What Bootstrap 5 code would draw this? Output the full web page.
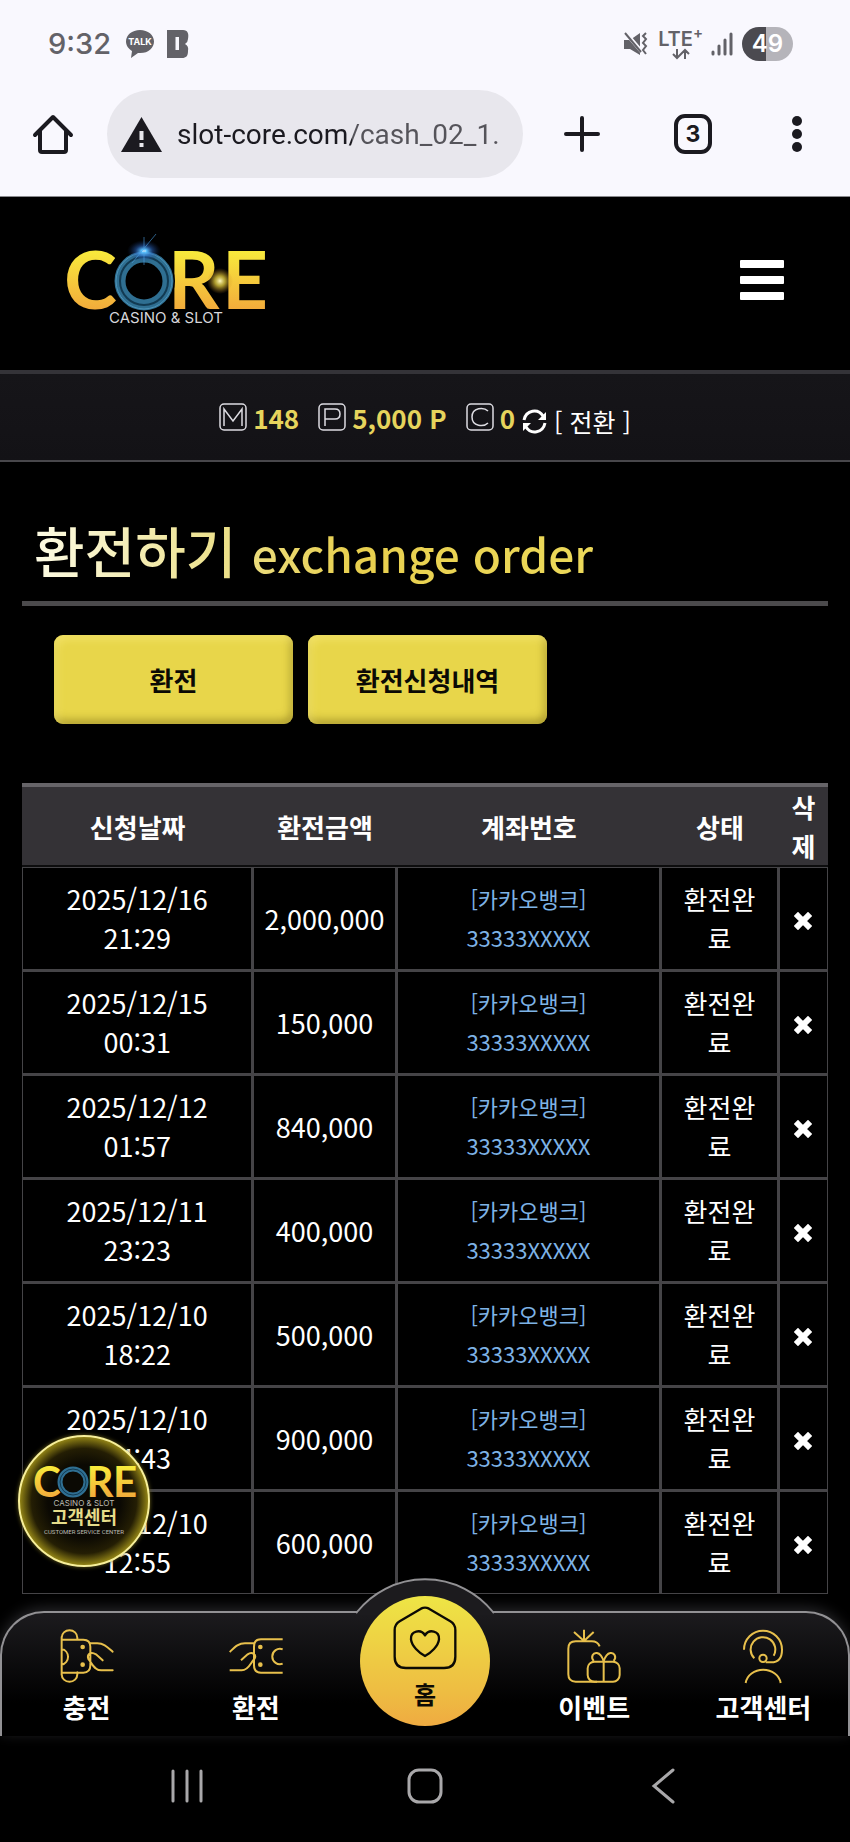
<!DOCTYPE html>
<html lang="ko">
<head>
<meta charset="utf-8">
<meta name="viewport" content="width=device-width, initial-scale=1">
<title>환전하기 - CORE CASINO &amp; SLOT</title>
<link href="https://cdn.jsdelivr.net/npm/bootstrap@5.3.0/dist/css/bootstrap.min.css" rel="stylesheet">
<style>
  body { background: #000; color: #fff; font-family: "Noto Sans CJK KR", sans-serif; font-size: 27px; line-height: 39px; }
  svg { display: block; flex-shrink: 0; overflow: visible; }
  .plain-btn { background: none; border: 0; padding: 0; color: inherit; }

  /* phone and browser chrome */
  .chrome-top { background: #f9f8fe; color: #1b1a20; font-family: Inter, sans-serif; border-bottom: 1px solid #8a8a8e; }
  .status-row { height: 90px; padding: 0 57px 3px 48px; color: #636268; }
  .clock { font-size: 29px; font-weight: 500; }
  .net-label { font-size: 20px; line-height: 20px; font-weight: 600; margin: 0 8px 0 10px; }
  .battery { width: 51px; height: 34px; border-radius: 17px; background: linear-gradient(90deg, #4b4a50 48%, #b5b4ba 48%); color: #fff; font-size: 24px; line-height: 34px; font-weight: 600; text-align: center; margin-left: 9px; }
  .status-apps { gap: 12px; margin-left: 14px; }
  .tool-row { padding: 0 48px 18px 33px; }
  .url-pill { height: 88px; border-radius: 44px; background: #e8e7ed; padding: 0 16px 0 14px; margin: 0 41px 0 34px; min-width: 0; gap: 15px; }
  .url-box { border: 0; outline: 0; padding: 0; width: 100%; min-width: 0; font-family: Roboto, sans-serif; font-size: 28px; color: transparent; background: linear-gradient(90deg, #1b1a20 175px, #55545a 175px); -webkit-background-clip: text; background-clip: text; }
  .tab-count { width: 40px; height: 40px; border: 4px solid #1b1a20; border-radius: 11px; font-size: 23px; line-height: 32px; font-weight: 700; margin: 0 80px 0 74px; }

  /* site header */
  .site-head { padding: 34px 66px 34px 66px; height: 173px; }
  .menu-btn { margin-top: 29px; }
  .wallet { background: linear-gradient(#161519, #131216); border-top: 4px solid #343338; border-bottom: 2px solid #48474b; height: 92px; }
  .wallet-item { gap: 6px; margin-right: 19px; }
  .wallet-item:nth-child(3) { margin-right: 7px; }
  .amount { color: #e6d45c; font-weight: 700; font-size: 26px; }
  .swap-link { font-size: 25px; gap: 7px; }

  /* page */
  .page-body { padding: 0 22px 17px; }
  .page-title { padding: 49px 12px 5px; margin: 0; border-bottom: 5px solid #4b4a4c; line-height: 76px; font-weight: 500; }
  .page-title span { background: linear-gradient(90deg, #fdfbe4, #ece08a 190px, #e8cf4e 320px, #ecd95a); -webkit-background-clip: text; background-clip: text; color: transparent; }
  .title-ko { font-size: 55px; }
  .title-ko small { font-size: 46px; font-weight: 500; }
  .tab-links { padding: 29px 32px 59px; gap: 15px; }
  .gold-btn { width: 239px; height: 89px; border: 0; border-radius: 9px; background: #e8d64a; color: #0b0a05; font-size: 26px; font-weight: 700; box-shadow: inset 3px 4px 8px rgba(255,240,130,.55), inset -2px -4px 8px rgba(120,105,20,.55); }

  .order-table { width: 100%; table-layout: fixed; border-collapse: separate; border-spacing: 0; text-align: center; }
  .order-table th { background: #343236; border-top: 4px solid #666468; border-bottom: 2px solid #0d0d0e; padding: 0 9px; height: 84px; font-weight: 700; font-size: 26px; }
  .order-table td { border: solid #454447; border-width: 1px 2px 2px 1px; padding: 11px 9px 12px; }
  .order-table td:last-child { border-right-width: 1px; }
  .order-table tr:last-child td { border-bottom-width: 1px; }
  .order-table .account { color: #7eb3e6; font-size: 22px; }
  .order-table .state { font-size: 26px; padding-left: 12px; padding-right: 12px; }
  .col-date { width: 28.7%; } .col-amount { width: 17.8%; } .col-account { width: 32.8%; } .col-state { width: 14.6%; } .col-del { width: 6.1%; }

  /* floating customer centre badge */
  .cs-badge { position: absolute; left: 18px; bottom: 44px; width: 132px; height: 132px; border-radius: 50%; border: 2px solid #f7ef9a; background: radial-gradient(#0b0903 40%, #241e04 58%, #8a7c14 70%); box-shadow: 0 0 4px #6b611a; z-index: 3; }

  /* bottom navigation */
  .dock { border: 2px solid #929194; border-bottom: 0; border-radius: 44px 44px 0 0; background: linear-gradient(#1c1b1e, #000 90px); box-shadow: 0 -3px 14px rgba(160,160,170,.25); height: 125px; z-index: 2; }
  .dock-bump { position: absolute; left: 50%; top: -35px; transform: translateX(-50%); }
  .dock a, .dock-gap { flex: 1 1 0; }
  .dock a { color: #fff; text-decoration: none; font-weight: 700; font-size: 26px; padding-top: 16px; }
  .dock a span { margin-top: 4px; white-space: nowrap; }
  .dock .home-disc { position: absolute; left: 50%; top: -17px; transform: translateX(-50%); width: 130px; height: 130px; border-radius: 50%; background: linear-gradient(#eee545, #eebc42 75%, #efab41); padding-top: 10px; color: #0c0a04; font-size: 24px; }
  .sys-row { padding: 32px 8% 37px; }
  .sys-row button { flex: 1 1 0; }
</style>
</head>
<body>

<svg width="0" height="0" class="position-absolute" aria-hidden="true">
  <defs>
    <linearGradient id="gold" x1="0" y1="0" x2="0" y2="1"><stop offset="0.2" stop-color="#f8ec3c"/><stop offset="0.85" stop-color="#f2a93b"/></linearGradient>
    <radialGradient id="flareBlue"><stop offset="0" stop-color="#fff"/><stop offset=".15" stop-color="#5cc4ff"/><stop offset=".5" stop-color="#2f6fd0" stop-opacity=".5"/><stop offset="1" stop-color="#14306a" stop-opacity="0"/></radialGradient>
    <radialGradient id="flareGold"><stop offset="0" stop-color="#fff9c0"/><stop offset=".4" stop-color="#f5dc40" stop-opacity=".7"/><stop offset="1" stop-color="#c08020" stop-opacity="0"/></radialGradient>
    <symbol id="cross" viewBox="0 0 18 18"><path d="M4 4 14 14M14 4 4 14" stroke="#fff" stroke-width="6" stroke-linecap="square"/></symbol>
  </defs>
</svg>

<header class="chrome-top">
  <div class="status-row d-flex align-items-center">
    <span class="clock">9:32</span>
    <div class="status-apps d-flex">
      <svg width="30" height="28" viewBox="0 0 30 28" role="img" aria-label="TALK"><path d="M15 0C7 0 1 5 1 11.500C1 16 4 19 7 21L6 28 13 23C23 24 29 18 29 11.500C29 5 23 0 15 0Z" fill="#636268"/><text x="15" y="15" text-anchor="middle" font-family="Inter, sans-serif" font-size="9" font-weight="700" fill="#fff">TALK</text></svg>
      <svg width="22" height="28" viewBox="0 0 22 28"><path d="M0 0H16C21 0 22 4 21 9Q21 12 18 14Q22 16 21 21C21 26 19 28 15 28H0ZM8.500 7V20H12V7Z" fill="#636268" fill-rule="evenodd"/></svg>
    </div>
    <svg class="ms-auto" width="24" height="24" viewBox="0 0 24 24" fill="#636268"><path d="M0 8H6L16 1V23L6 17H0Z"/><path d="M1 0 18 20" stroke="#f9f8fe" stroke-width="4"/><path d="M1 1 17 20M22 1 19 4 22 7 19 11 22 14 19 18 22 22" stroke="#636268" stroke-width="2" fill="none"/></svg>
    <div class="net-label d-flex flex-column align-items-center">
      <span>LTE<sup>+</sup></span>
      <svg width="18" height="10" viewBox="0 0 18 10" fill="none" stroke="#636268" stroke-width="2"><path d="M5 0V9M1 5 5 9 9 5M13 10V1M9 5 13 1 17 5"/></svg>
    </div>
    <svg width="22" height="24" viewBox="0 0 22 24" stroke="#636268" stroke-width="3" stroke-linecap="round"><path d="M2 20V22M8 14V22M14 8V22M20 2V22"/></svg>
    <div class="battery">49</div>
  </div>
  <div class="tool-row d-flex align-items-center">
    <button class="plain-btn" aria-label="홈"><svg width="40" height="42" viewBox="0 0 40 42" fill="none" stroke="#1b1a20" stroke-width="4" stroke-linejoin="round" stroke-linecap="round"><path d="M2 22 20 4 38 22M7 18V37Q7 39 9 39H31Q33 39 33 37V18"/></svg></button>
    <label class="url-pill d-flex align-items-center flex-grow-1">
      <svg width="41" height="35" viewBox="0 0 41 35"><path d="M20.500 0 41 35H0Z" fill="#1b1a20"/><path d="M20.500 14V23M20.500 26V30" stroke="#e8e7ed" stroke-width="4"/></svg>
      <input class="url-box" type="text" aria-label="주소" value="slot-core.com/cash_02_1.">
    </label>
    <button class="plain-btn" aria-label="새 탭"><svg width="36" height="36" viewBox="0 0 36 36" stroke="#1b1a20" stroke-width="4" stroke-linecap="round"><path d="M18 2V34M2 18H34"/></svg></button>
    <button class="plain-btn tab-count">3</button>
    <button class="plain-btn" aria-label="메뉴"><svg width="10" height="36" viewBox="0 0 10 36" fill="#1b1a20"><circle cx="5" cy="5" r="5"/><circle cx="5" cy="18" r="5"/><circle cx="5" cy="31" r="5"/></svg></button>
  </div>
</header>

<nav class="site-head d-flex justify-content-between align-items-start">
  <a href="#" aria-label="CORE CASINO &amp; SLOT">
    <svg width="204" height="98" viewBox="0 0 204 98">
      <g font-family="Lato, sans-serif" font-weight="700" font-size="80" fill="url(#gold)">
        <text x="-2" y="78">C</text><text x="102" y="78">R</text><text x="156" y="78">E</text>
      </g>
      <circle cx="78" cy="50" r="31" fill="#000"/>
      <circle cx="78" cy="50" r="24" fill="none" stroke="#2f6f92" stroke-width="11"/>
      <circle cx="78" cy="50" r="24" fill="none" stroke="#123a52" stroke-width="2"/>
      <circle cx="78" cy="50" r="28" fill="none" stroke="#4d93b8" stroke-width="1"/>
      <ellipse cx="78" cy="20" rx="17" ry="11" fill="url(#flareBlue)"/>
      <path d="M66 32 90 3 M78 6V34" stroke="#4a9de0" stroke-width="1" opacity=".6"/>
      <circle cx="154" cy="50" r="13" fill="url(#flareGold)"/>
      <text x="100" y="92" text-anchor="middle" font-family="Inter, sans-serif" font-size="15" fill="#d6d6da">CASINO &amp; SLOT</text>
    </svg>
  </a>
  <button class="plain-btn menu-btn" aria-label="전체 메뉴"><svg width="44" height="40" viewBox="0 0 44 40" fill="#fff"><rect width="44" height="8" rx="1"/><rect y="16" width="44" height="8" rx="1"/><rect y="32" width="44" height="8" rx="1"/></svg></button>
</nav>

<section class="wallet d-flex align-items-center justify-content-center">
  <div class="wallet-item d-flex align-items-center">
    <svg width="28" height="28" viewBox="0 0 28 28" fill="none" stroke="#dddce2" stroke-width="1.500"><rect x="1" y="1" width="26" height="26" rx="4"/><path d="M5 23V6L14 18 23 6V23"/></svg>
    <span class="amount">148</span>
  </div>
  <div class="wallet-item d-flex align-items-center">
    <svg width="28" height="28" viewBox="0 0 28 28" fill="none" stroke="#dddce2" stroke-width="1.500"><rect x="1" y="1" width="26" height="26" rx="4"/><path d="M7 23V6H17Q22 6 22 11T17 16H7"/></svg>
    <span class="amount">5,000 P</span>
  </div>
  <div class="wallet-item d-flex align-items-center">
    <svg width="28" height="28" viewBox="0 0 28 28" fill="none" stroke="#dddce2" stroke-width="1.500"><rect x="1" y="1" width="26" height="26" rx="4"/><path d="M22 8C18 4 6 4 6 14S18 24 22 20"/></svg>
    <span class="amount">0</span>
  </div>
  <a href="#" class="swap-link d-flex align-items-center text-white text-decoration-none mt-2">
    <svg width="25" height="25" viewBox="0 0 25 25" fill="none" stroke="#fff" stroke-width="3"><path d="M2 11C4 1 16 -1 21 7M23 14C21 24 9 26 4 18"/><path d="M24 3V11H16ZM1 22V14H9Z" fill="#fff" stroke="none"/></svg>
    <span>[ 전환 ]</span>
  </a>
</section>

<main class="position-relative">
  <div class="page-body">
    <h1 class="page-title"><span class="title-ko">환전하기 <small>exchange order</small></span></h1>
    <div class="tab-links d-flex flex-wrap">
      <button class="gold-btn">환전</button>
      <button class="gold-btn">환전신청내역</button>
    </div>
    <table class="order-table">
      <colgroup><col class="col-date"><col class="col-amount"><col class="col-account"><col class="col-state"><col class="col-del"></colgroup>
      <thead><tr><th scope="col">신청날짜</th><th scope="col">환전금액</th><th scope="col">계좌번호</th><th scope="col">상태</th><th scope="col">삭제</th></tr></thead>
      <tbody>
        <tr><td>2025/12/16 21:29</td><td>2,000,000</td><td class="account">[카카오뱅크]<br>33333XXXXX</td><td class="state">환전완료</td><td><button class="plain-btn" aria-label="삭제"><svg width="18" height="18"><use href="#cross"/></svg></button></td></tr>
        <tr><td>2025/12/15 00:31</td><td>150,000</td><td class="account">[카카오뱅크]<br>33333XXXXX</td><td class="state">환전완료</td><td><button class="plain-btn" aria-label="삭제"><svg width="18" height="18"><use href="#cross"/></svg></button></td></tr>
        <tr><td>2025/12/12 01:57</td><td>840,000</td><td class="account">[카카오뱅크]<br>33333XXXXX</td><td class="state">환전완료</td><td><button class="plain-btn" aria-label="삭제"><svg width="18" height="18"><use href="#cross"/></svg></button></td></tr>
        <tr><td>2025/12/11 23:23</td><td>400,000</td><td class="account">[카카오뱅크]<br>33333XXXXX</td><td class="state">환전완료</td><td><button class="plain-btn" aria-label="삭제"><svg width="18" height="18"><use href="#cross"/></svg></button></td></tr>
        <tr><td>2025/12/10 18:22</td><td>500,000</td><td class="account">[카카오뱅크]<br>33333XXXXX</td><td class="state">환전완료</td><td><button class="plain-btn" aria-label="삭제"><svg width="18" height="18"><use href="#cross"/></svg></button></td></tr>
        <tr><td>2025/12/10 14:43</td><td>900,000</td><td class="account">[카카오뱅크]<br>33333XXXXX</td><td class="state">환전완료</td><td><button class="plain-btn" aria-label="삭제"><svg width="18" height="18"><use href="#cross"/></svg></button></td></tr>
        <tr><td>2025/12/10 12:55</td><td>600,000</td><td class="account">[카카오뱅크]<br>33333XXXXX</td><td class="state">환전완료</td><td><button class="plain-btn" aria-label="삭제"><svg width="18" height="18"><use href="#cross"/></svg></button></td></tr>
      </tbody>
    </table>
  </div>
  <a href="#" class="cs-badge" aria-label="고객센터">
    <svg width="128" height="128" viewBox="0 0 128 128" text-anchor="middle">
      <g font-family="Lato, sans-serif" font-weight="700" font-size="42" fill="url(#gold)"><text x="27" y="60">C</text><text x="80" y="60">R</text><text x="105" y="60">E</text></g>
      <circle cx="53" cy="45" r="16" fill="#0b0903"/>
      <circle cx="53" cy="45" r="13" fill="none" stroke="#2f6f92" stroke-width="5"/>
      <circle cx="53" cy="45" r="13" fill="none" stroke="#123a52" stroke-width="1"/>
      <text x="64" y="69" font-family="Inter, sans-serif" font-size="8" fill="#bdbcb4">CASINO &amp; SLOT</text>
      <text x="64" y="87" font-family="'Noto Sans CJK KR', sans-serif" font-size="18" font-weight="700" fill="#e5dc8a">고객센터</text>
      <text x="64" y="97" font-family="Roboto, sans-serif" font-size="6" fill="#bdbcb4">CUSTOMER SERVICE CENTER</text>
    </svg>
  </a>
</main>

<nav class="dock position-relative d-flex">
  <svg class="dock-bump" width="140" height="37" viewBox="0 0 140 37"><path d="M0 36 2 34A87 87 0 0 1 138 34L140 36V37H0Z" fill="#1c1b1e"/><path d="M1 35 2 34A87 87 0 0 1 138 34L139 35" fill="none" stroke="#929194" stroke-width="2"/></svg>
  <a href="#" class="d-flex flex-column align-items-center">
    <svg width="54" height="54" viewBox="0 0 162 162" fill="none" stroke="#e8c04c" stroke-width="6" stroke-linecap="round"><path d="M5 24V138M5 30V26A23 22 0 0 1 52 26V32M5 130V136A23 22 0 0 0 52 136V130M5 32H70Q91 32 91 53V109Q91 131 70 131H5M5 60A24 24 0 0 1 5 107M91 43H112C132 43 142 54 158 68M128 94 108 76C92 66 80 76 85 90C94 98 100 124 124 124H158"/><circle cx="68" cy="54" r="4" fill="#e8c04c"/><circle cx="68" cy="107" r="4" fill="#e8c04c"/></svg>
    <span>충전</span>
  </a>
  <a href="#" class="d-flex flex-column align-items-center">
    <svg width="54" height="54" viewBox="0 0 162 162" fill="none" stroke="#e8c04c" stroke-width="6"><path d="M161 31H96Q75 31 75 53V109Q75 131 96 131H161M161 61A23 23 0 1 0 161 104M2 69C18 54 28 43 48 43H75M36 94 56 76C70 66 84 78 76 90C66 98 60 124 38 124H2"/><circle cx="94" cy="54" r="4" fill="#e8c04c"/><circle cx="94" cy="107" r="4" fill="#e8c04c"/></svg>
    <span>환전</span>
  </a>
  <div class="dock-gap"></div>
  <a href="#" class="home-disc d-flex flex-column align-items-center">
    <svg width="64" height="64" viewBox="0 0 192 192" fill="none" stroke="#0c0a04" stroke-width="7" stroke-linecap="round"><path d="M84 8Q96 2 108 8L172 46Q187 55 187 72V152Q187 186 153 186H39Q5 186 5 152V72Q5 55 20 46ZM96 88C84 68 52 74 54 100C56 120 78 140 96 150C114 140 136 120 138 100C140 74 108 68 96 88"/></svg>
    <span>홈</span>
  </a>
  <a href="#" class="d-flex flex-column align-items-center">
    <svg width="54" height="54" viewBox="0 0 162 162" fill="none" stroke="#e8c04c" stroke-width="6"><path d="M98 52Q92 37 74 37H26Q4 37 4 59V136Q4 158 26 158H90M51 36V2M51 36 21 9M51 36 80 9"/><rect x="62" y="98" width="96" height="60" rx="20"/><path d="M110 98V158M80 96C70 84 78 70 90 72C102 74 106 84 110 97C114 84 118 74 130 72C142 70 150 84 140 96"/></svg>
    <span>이벤트</span>
  </a>
  <a href="#" class="d-flex flex-column align-items-center">
    <svg width="54" height="54" viewBox="-21 0 162 162" fill="none" stroke="#e8c04c" stroke-width="6"><path d="M3 62A57 57 0 0 1 117 62Q117 100 84 100H68M34 88A37 37 0 1 1 92 80M8 162A53 46 0 0 1 113 162"/><circle cx="60" cy="88" r="11"/></svg>
    <span>고객센터</span>
  </a>
</nav>

<footer class="sys-row d-flex">
  <button class="plain-btn d-flex justify-content-center" aria-label="최근 앱"><svg width="34" height="36" viewBox="0 0 34 36" stroke="#a9a8aa" stroke-width="3" stroke-linecap="round"><path d="M3 3V33M17 3V33M31 3V33"/></svg></button>
  <button class="plain-btn d-flex justify-content-center" aria-label="홈 화면"><svg width="36" height="36" viewBox="0 0 36 36" fill="none" stroke="#a9a8aa" stroke-width="3"><rect x="2" y="2" width="32" height="32" rx="10"/></svg></button>
  <button class="plain-btn d-flex justify-content-center" aria-label="뒤로"><svg width="24" height="36" viewBox="0 0 24 36" fill="none" stroke="#a9a8aa" stroke-width="3" stroke-linecap="round"><path d="M22 2 3 18 22 34"/></svg></button>
</footer>

<script src="https://cdn.jsdelivr.net/npm/bootstrap@5.3.0/dist/js/bootstrap.bundle.min.js"></script>
</body>
</html>
